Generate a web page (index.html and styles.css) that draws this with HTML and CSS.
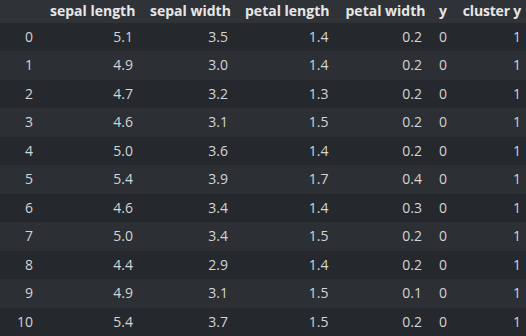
FILE: index.html
```html
<!DOCTYPE html>
<html>
<head>
<meta charset="utf-8">
<link rel="stylesheet" href="styles.css">
</head>
<body>
<table class="df">
  <colgroup>
    <col class="c-idx"><col class="c-sl"><col class="c-sw"><col class="c-pl"><col class="c-pw"><col class="c-y"><col class="c-cy">
  </colgroup>
  <thead>
    <tr><th></th><th>sepal length</th><th>sepal width</th><th>petal length</th><th>petal width</th><th>y</th><th class="last">cluster y</th></tr>
  </thead>
  <tbody>
    <tr><td>0</td><td>5.1</td><td>3.5</td><td>1.4</td><td>0.2</td><td>0</td><td>1</td></tr>
    <tr><td>1</td><td>4.9</td><td>3.0</td><td>1.4</td><td>0.2</td><td>0</td><td>1</td></tr>
    <tr><td>2</td><td>4.7</td><td>3.2</td><td>1.3</td><td>0.2</td><td>0</td><td>1</td></tr>
    <tr><td>3</td><td>4.6</td><td>3.1</td><td>1.5</td><td>0.2</td><td>0</td><td>1</td></tr>
    <tr><td>4</td><td>5.0</td><td>3.6</td><td>1.4</td><td>0.2</td><td>0</td><td>1</td></tr>
    <tr><td>5</td><td>5.4</td><td>3.9</td><td>1.7</td><td>0.4</td><td>0</td><td>1</td></tr>
    <tr><td>6</td><td>4.6</td><td>3.4</td><td>1.4</td><td>0.3</td><td>0</td><td>1</td></tr>
    <tr><td>7</td><td>5.0</td><td>3.4</td><td>1.5</td><td>0.2</td><td>0</td><td>1</td></tr>
    <tr><td>8</td><td>4.4</td><td>2.9</td><td>1.4</td><td>0.2</td><td>0</td><td>1</td></tr>
    <tr><td>9</td><td>4.9</td><td>3.1</td><td>1.5</td><td>0.1</td><td>0</td><td>1</td></tr>
    <tr><td>10</td><td>5.4</td><td>3.7</td><td>1.5</td><td>0.2</td><td>0</td><td>1</td></tr>
  </tbody>
</table>
</body>
</html>
```
FILE: styles.css
```css
html, body {
  margin: 0;
  padding: 0;
  background: #25282c;
  overflow: hidden;
}
.df {
  border-collapse: collapse;
  table-layout: fixed;
  width: 529.5px;
  font-family: "Open Sans", "Noto Sans", sans-serif;
  font-size: 14px;
  color: #d4d5d6;
}
.c-idx { width: 41.5px; }
.c-sl { width: 100px; }
.c-sw { width: 95px; }
.c-pl { width: 100.5px; }
.c-pw { width: 93.5px; }
.c-y { width: 25px; }
.c-cy { width: 74px; }
.df th, .df td {
  padding: 0 8.5px;
  text-align: right;
  white-space: nowrap;
  vertical-align: middle;
}
.df th.last {
  padding-left: 0;
  letter-spacing: -0.2px;
}
.df thead tr {
  background: #2f3236;
  height: 22.5px;
}
.df th {
  font-weight: 700;
  color: #e6e6e6;
  line-height: 22.5px;
}
.df tbody tr {
  height: 28.5px;
}
.df td {
  line-height: 28.5px;
}
.df tbody tr:nth-child(odd) { background: #25282c; }
.df tbody tr:nth-child(even) { background: #2c2f33; }
```
